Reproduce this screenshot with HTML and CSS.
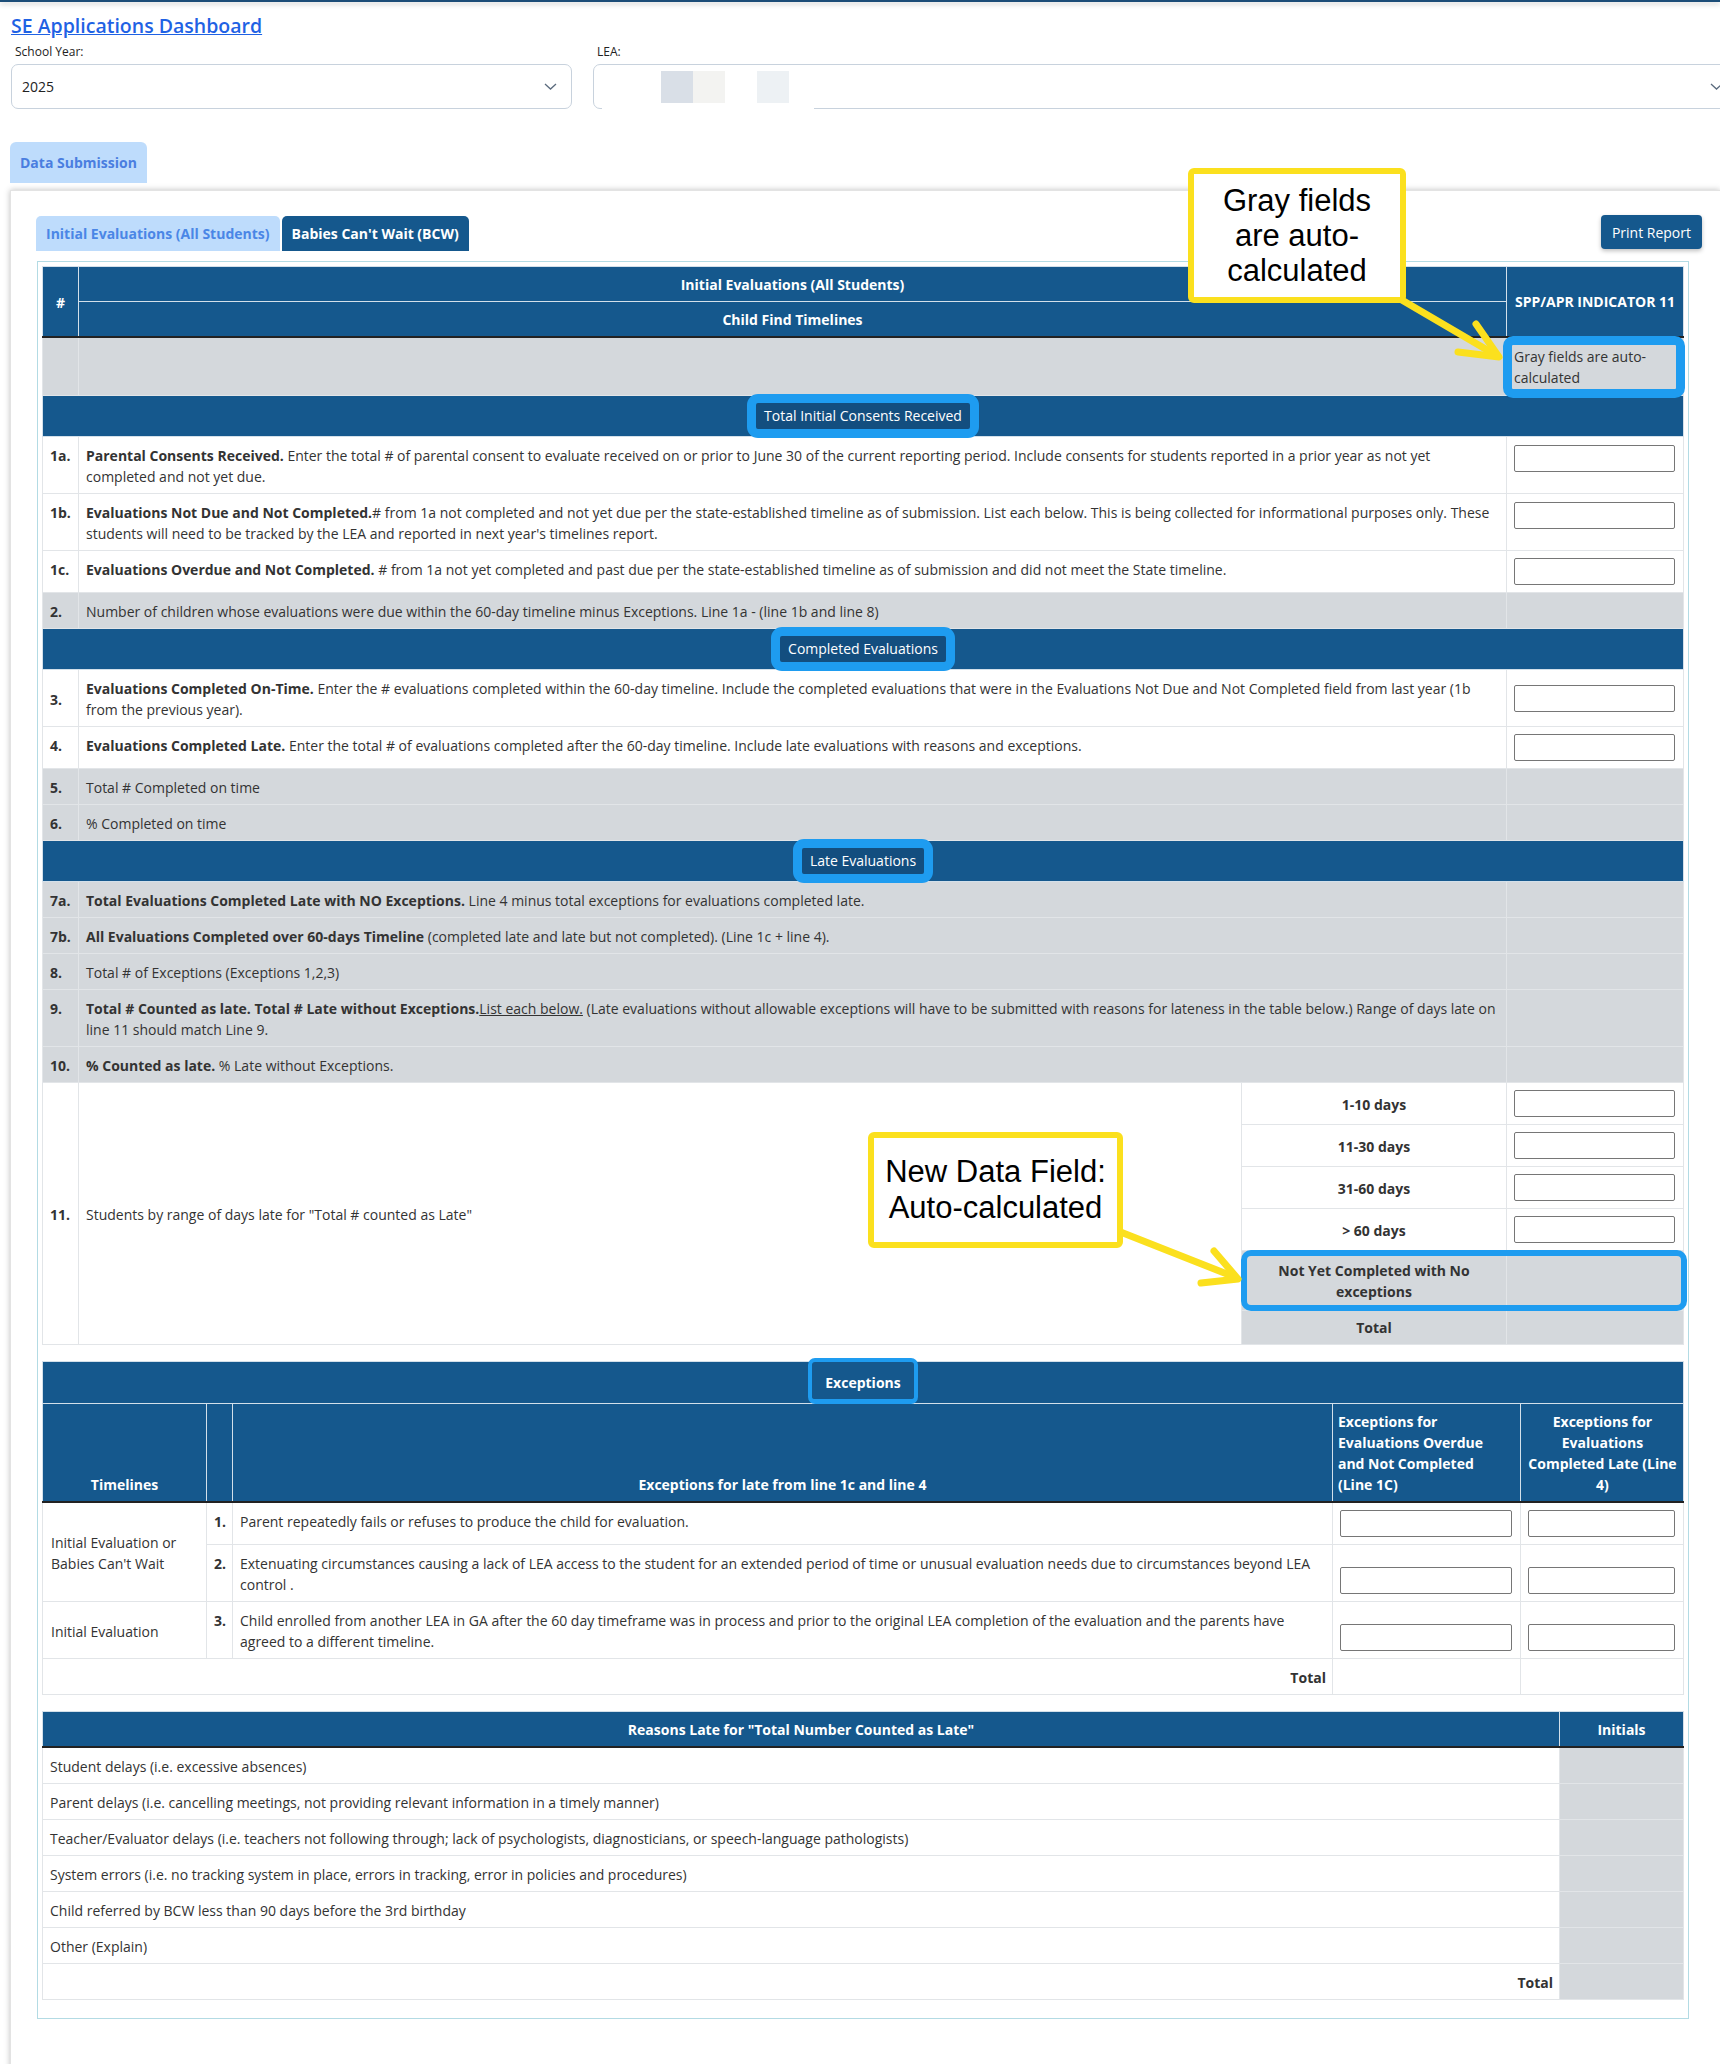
FILE: index.html
```html
<!DOCTYPE html>
<html lang="en">
<head>
    <meta charset="UTF-8">
    <title>SE Applications Dashboard</title>
    <link rel="stylesheet" href="styles.css">
</head>
<body>

    <div class="topbar"></div>

    <div class="page">
        <a class="app-title" href="#">SE Applications Dashboard</a>

        <!-- Filters -->
        <div class="filters">
            <div class="filter filter-year">
                <label>School Year:</label>
                <div class="select">
                    <span>2025</span>
                    <svg class="chev" width="13" height="7" viewBox="0 0 13 7"><polyline points="1,1 6.5,6 12,1" fill="none" stroke="#5b6b7e" stroke-width="1.3"/></svg>
                </div>
            </div>
            <div class="filter filter-lea">
                <label>LEA:</label>
                <div class="select select-lea">
                    <span class="redact">
                        <span class="blk b1"></span><span class="blk b2"></span><span class="blk gap"></span><span class="blk b3"></span>
                    </span>
                    <svg class="chev" width="13" height="7" viewBox="0 0 13 7"><polyline points="1,1 6.5,6 12,1" fill="none" stroke="#5b6b7e" stroke-width="1.3"/></svg>
                    <span class="cover"></span>
                </div>
            </div>
        </div>

        <div class="page-tabs">
            <span class="page-tab">Data Submission</span>
        </div>

        <!-- Main card -->
        <div class="card">
            <div class="card-tabs">
                <span class="tab tab-light">Initial Evaluations (All Students)</span>
                <span class="tab tab-dark">Babies Can't Wait (BCW)</span>
                <button class="print-btn" type="button">Print Report</button>
            </div>

            <div class="report-box">

                <!-- Child find timelines -->
                <table class="grid main-table">
                    <colgroup>
                        <col class="c-num"><col><col class="c-lbl"><col class="c-val">
                    </colgroup>
                    <thead>
                        <tr>
                            <th rowspan="2" class="hb">#</th>
                            <th colspan="2">Initial Evaluations (All Students)</th>
                            <th rowspan="2" class="hb tight">SPP/APR INDICATOR 11</th>
                        </tr>
                        <tr>
                            <th colspan="2" class="hb">Child Find Timelines</th>
                        </tr>
                    </thead>
                    <tbody>
                        <tr class="gr">
                            <td></td>
                            <td colspan="2"></td>
                            <td class="note-cell"><span class="ring ring-note"></span>Gray fields are auto-calculated</td>
                        </tr>

                        <tr class="section"><td colspan="4"><span class="sec-label">Total Initial Consents Received</span></td></tr>
                        <tr>
                            <td class="n">1a.</td>
                            <td colspan="2"><b>Parental Consents Received.</b> Enter the total # of parental consent to evaluate received on or prior to June 30 of the current reporting period. Include consents for students reported in a prior year as not yet completed and not yet due.</td>
                            <td class="v top"><input type="text"></td>
                        </tr>
                        <tr>
                            <td class="n">1b.</td>
                            <td colspan="2"><b>Evaluations Not Due and Not Completed.</b># from 1a not completed and not yet due per the state-established timeline as of submission. List each below. This is being collected for informational purposes only. These students will need to be tracked by the LEA and reported in next year's timelines report.</td>
                            <td class="v top"><input type="text"></td>
                        </tr>
                        <tr>
                            <td class="n">1c.</td>
                            <td colspan="2"><b>Evaluations Overdue and Not Completed.</b> # from 1a not yet completed and past due per the state-established timeline as of submission and did not meet the State timeline.</td>
                            <td class="v"><input type="text"></td>
                        </tr>
                        <tr class="gr">
                            <td class="n">2.</td>
                            <td colspan="2">Number of children whose evaluations were due within the 60-day timeline minus Exceptions. Line 1a - (line 1b and line 8)</td>
                            <td></td>
                        </tr>

                        <tr class="section"><td colspan="4"><span class="sec-label">Completed Evaluations</span></td></tr>
                        <tr>
                            <td class="n mid">3.</td>
                            <td colspan="2"><b>Evaluations Completed On-Time.</b> Enter the # evaluations completed within the 60-day timeline. Include the completed evaluations that were in the Evaluations Not Due and Not Completed field from last year (1b from the previous year).</td>
                            <td class="v"><input type="text"></td>
                        </tr>
                        <tr>
                            <td class="n">4.</td>
                            <td colspan="2"><b>Evaluations Completed Late.</b> Enter the total # of evaluations completed after the 60-day timeline. Include late evaluations with reasons and exceptions.</td>
                            <td class="v"><input type="text"></td>
                        </tr>
                        <tr class="gr">
                            <td class="n">5.</td>
                            <td colspan="2">Total # Completed on time</td>
                            <td></td>
                        </tr>
                        <tr class="gr">
                            <td class="n">6.</td>
                            <td colspan="2">% Completed on time</td>
                            <td></td>
                        </tr>

                        <tr class="section"><td colspan="4"><span class="sec-label">Late Evaluations</span></td></tr>
                        <tr class="gr">
                            <td class="n">7a.</td>
                            <td colspan="2"><b>Total Evaluations Completed Late with NO Exceptions.</b> Line 4 minus total exceptions for evaluations completed late.</td>
                            <td></td>
                        </tr>
                        <tr class="gr">
                            <td class="n">7b.</td>
                            <td colspan="2"><b>All Evaluations Completed over 60-days Timeline</b> (completed late and late but not completed). (Line 1c + line 4).</td>
                            <td></td>
                        </tr>
                        <tr class="gr">
                            <td class="n">8.</td>
                            <td colspan="2">Total # of Exceptions (Exceptions 1,2,3)</td>
                            <td></td>
                        </tr>
                        <tr class="gr">
                            <td class="n">9.</td>
                            <td colspan="2"><b>Total # Counted as late. Total # Late without Exceptions.</b><u>List each below.</u> (Late evaluations without allowable exceptions will have to be submitted with reasons for lateness in the table below.) Range of days late on line 11 should match Line 9.</td>
                            <td></td>
                        </tr>
                        <tr class="gr">
                            <td class="n">10.</td>
                            <td colspan="2"><b>% Counted as late.</b> % Late without Exceptions.</td>
                            <td></td>
                        </tr>

                        <tr>
                            <td class="n mid" rowspan="6">11.</td>
                            <td class="mid" rowspan="6">Students by range of days late for "Total # counted as Late"</td>
                            <td class="lbl">1-10 days</td>
                            <td class="v"><input type="text"></td>
                        </tr>
                        <tr>
                            <td class="lbl">11-30 days</td>
                            <td class="v"><input type="text"></td>
                        </tr>
                        <tr>
                            <td class="lbl">31-60 days</td>
                            <td class="v"><input type="text"></td>
                        </tr>
                        <tr>
                            <td class="lbl">&gt; 60 days</td>
                            <td class="v"><input type="text"></td>
                        </tr>
                        <tr>
                            <td class="lbl g ringed"><span class="ring ring-row"></span>Not Yet Completed with No exceptions</td>
                            <td class="g"></td>
                        </tr>
                        <tr>
                            <td class="lbl g short">Total</td>
                            <td class="g"></td>
                        </tr>
                    </tbody>
                </table>

                <!-- Exceptions -->
                <table class="grid exc-table">
                    <colgroup>
                        <col class="c-time"><col class="c-xn"><col><col class="c-x4"><col class="c-x5">
                    </colgroup>
                    <thead>
                        <tr class="section"><td colspan="5"><span class="sec-label thin">Exceptions</span></td></tr>
                        <tr class="exc-head">
                            <th class="hb">Timelines</th>
                            <th class="hb"></th>
                            <th class="hb">Exceptions for late from line 1c and line 4</th>
                            <th class="hb left nw">Exceptions for<br>Evaluations Overdue<br>and Not Completed<br>(Line 1C)</th>
                            <th class="hb nw">Exceptions for<br>Evaluations<br>Completed Late (Line<br>4)</th>
                        </tr>
                    </thead>
                    <tbody>
                        <tr>
                            <td class="mid time" rowspan="2">Initial Evaluation or Babies Can't Wait</td>
                            <td class="n xn">1.</td>
                            <td>Parent repeatedly fails or refuses to produce the child for evaluation.</td>
                            <td class="v bot"><input type="text"></td>
                            <td class="v bot"><input type="text"></td>
                        </tr>
                        <tr>
                            <td class="n xn">2.</td>
                            <td>Extenuating circumstances causing a lack of LEA access to the student for an extended period of time or unusual evaluation needs due to circumstances beyond LEA control .</td>
                            <td class="v bot"><input type="text"></td>
                            <td class="v bot"><input type="text"></td>
                        </tr>
                        <tr>
                            <td class="mid time">Initial Evaluation</td>
                            <td class="n xn">3.</td>
                            <td>Child enrolled from another LEA in GA after the 60 day timeframe was in process and prior to the original LEA completion of the evaluation and the parents have agreed to a different timeline.</td>
                            <td class="v bot"><input type="text"></td>
                            <td class="v bot"><input type="text"></td>
                        </tr>
                        <tr>
                            <td colspan="3" class="total">Total</td>
                            <td></td>
                            <td></td>
                        </tr>
                    </tbody>
                </table>

                <!-- Reasons late -->
                <table class="grid reasons-table">
                    <colgroup>
                        <col><col class="c-init">
                    </colgroup>
                    <thead>
                        <tr>
                            <th class="hb">Reasons Late for "Total Number Counted as Late"</th>
                            <th class="hb">Initials</th>
                        </tr>
                    </thead>
                    <tbody>
                        <tr><td>Student delays (i.e. excessive absences)</td><td class="g"></td></tr>
                        <tr><td>Parent delays (i.e. cancelling meetings, not providing relevant information in a timely manner)</td><td class="g"></td></tr>
                        <tr><td>Teacher/Evaluator delays (i.e. teachers not following through; lack of psychologists, diagnosticians, or speech-language pathologists)</td><td class="g"></td></tr>
                        <tr><td>System errors (i.e. no tracking system in place, errors in tracking, error in policies and procedures)</td><td class="g"></td></tr>
                        <tr><td>Child referred by BCW less than 90 days before the 3rd birthday</td><td class="g"></td></tr>
                        <tr><td>Other (Explain)</td><td class="g"></td></tr>
                        <tr><td class="total">Total</td><td class="g"></td></tr>
                    </tbody>
                </table>

            </div>
        </div>
    </div>

    <!-- Annotations -->
    <svg class="arrows" width="1720" height="2064" viewBox="0 0 1720 2064">
        <g fill="none" stroke="#fbe01e" stroke-width="7" stroke-linecap="round" stroke-linejoin="round">
            <path d="M1395 296 L1494 354"/>
            <path d="M1476 324 L1499 357 L1458 352"/>
            <path d="M1118 1231 L1232 1276"/>
            <path d="M1214 1251 L1238 1279 L1201 1283"/>
        </g>
    </svg>
    <div class="callout callout-gray">Gray fields<br>are auto-<br>calculated</div>
    <div class="callout callout-new">New Data Field:<br>Auto-calculated</div>

</body>
</html>
```

FILE: styles.css
```css
html, body {
    margin: 0;
    padding: 0;
    overflow: hidden;
}

body {
    position: relative;
    font-family: "Open Sans", "Liberation Sans", Arial, sans-serif;
    color: #333;
    background: #fff;
}

/* Top strip */
.topbar {
    height: 2px;
    background: #1c4d78;
    box-shadow: 0 2px 5px rgba(0, 0, 0, 0.25);
}

.page {
    padding: 12px 0 0 10px;
}

.app-title {
    display: inline-block;
    margin-left: 1px;
    font-size: 19.5px;
    font-weight: 600;
    line-height: 24px;
    color: #1f62e4;
    text-decoration: underline;
}

/* Filters */
.filters {
    display: flex;
    gap: 21px;
    margin: 6px 0 0 1px;
}

.filter {
    flex: none;
}

.filter-year {
    width: 561px;
}

.filter-lea {
    width: 1145px;
}

.filter label {
    display: block;
    font-size: 12px;
    line-height: 16px;
    padding-left: 4px;
    margin-bottom: 4px;
    color: #222;
}

.select {
    position: relative;
    display: flex;
    align-items: center;
    justify-content: space-between;
    height: 45px;
    box-sizing: border-box;
    padding: 0 14px 0 10px;
    border: 1px solid #c8d2dd;
    border-radius: 7px;
    font-size: 14px;
    color: #222;
}

.redact {
    display: flex;
    margin-left: 57px;
}

.blk {
    width: 32px;
    height: 32px;
}

.b1 { background: #d9dfe7; }
.b2 { background: #f3f3f1; }
.gap { background: transparent; }
.b3 { background: #edf1f4; }

.select-lea .cover {
    position: absolute;
    left: 8px;
    bottom: -2px;
    width: 212px;
    height: 4px;
    background: #fff;
}

/* Page tab */
.page-tabs {
    display: flex;
    margin-top: 33px;
}

.page-tab {
    height: 41px;
    line-height: 41px;
    padding: 0 10px;
    background: #bedcfc;
    color: #4a7ee0;
    font-weight: 700;
    font-size: 14px;
    border-radius: 6px 6px 0 0;
}

/* Card */
.card {
    margin-top: 7px;
    background: #fff;
    border: 1px solid #e3e3e3;
    border-right: 0;
    box-shadow: 0 0 6px rgba(0, 0, 0, 0.25);
    padding: 25px 18px 60px 25px;
}

.card-tabs {
    display: flex;
    align-items: flex-start;
}

.tab {
    height: 35px;
    line-height: 35px;
    padding: 0 10px;
    font-size: 14px;
    font-weight: 700;
    border-radius: 5px 5px 0 0;
}

.tab + .tab {
    margin-left: 2px;
}

.tab-light {
    background: #bedcfc;
    color: #4a86e6;
}

.tab-dark {
    background: #15588d;
    color: #fff;
}

.print-btn {
    margin-left: auto;
    margin-top: -1px;
    height: 34px;
    padding: 0 11px;
    border: none;
    border-radius: 4px;
    background: #15588d;
    color: #fff;
    font-family: inherit;
    font-size: 14px;
    box-shadow: 0 2px 4px rgba(0, 0, 0, 0.25);
}

.report-box {
    margin: 10px 13px 0 1px;
    border: 1px solid #b3dbe4;
    padding: 4px 4px 18px;
}

/* Tables */
.grid {
    width: 100%;
    table-layout: fixed;
    border-collapse: collapse;
    font-size: 14px;
    line-height: 21px;
    color: #333;
}

.grid + .grid {
    margin-top: 16px;
}

.grid th {
    background: #15588d;
    color: #fff;
    font-weight: 700;
    border: 1px solid #d3e0ea;
    padding: 7px 7px 6px;
    text-align: center;
    vertical-align: middle;
}

.grid th.tight {
    padding: 7px 3px;
    white-space: nowrap;
}

.grid th.nw {
    white-space: nowrap;
    padding-left: 5px;
    padding-right: 4px;
}

.grid .hb {
    border-bottom: 2px solid #222;
}

.grid td {
    border: 1px solid #e2e5e8;
    padding: 8px 7px 6px;
    vertical-align: top;
}

.grid b {
    font-weight: 700;
}

.c-num { width: 36px; }
.c-lbl { width: 265px; }
.c-val { width: 177px; }

.c-time { width: 164px; }
.c-xn { width: 26px; }
.c-x4 { width: 188px; }
.c-x5 { width: 163px; }

.c-init { width: 124px; }

.gr td,
.grid td.g {
    background: #d4d8dc;
}

.n {
    font-weight: 700;
    white-space: nowrap;
}

.grid td.mid {
    vertical-align: middle;
}

.grid td.v {
    vertical-align: middle;
    padding: 7px 8px 7px 7px;
}

.grid td.v.top {
    vertical-align: top;
    padding-top: 8px;
    padding-bottom: 6px;
}

.grid td.v.bot {
    vertical-align: bottom;
    padding-bottom: 7px;
}

.grid input {
    display: block;
    width: 100%;
    height: 27px;
    box-sizing: border-box;
    margin: 0;
    border: 1px solid #767676;
    border-radius: 2px;
    background: #fff;
}

.grid td.lbl {
    text-align: center;
    font-weight: 700;
    vertical-align: middle;
}

.grid td.ringed {
    padding: 9px 7px 8px;
}

.grid td.short {
    padding: 6px 7px;
}

.grid td.total {
    text-align: right;
    font-weight: 700;
    vertical-align: middle;
    padding-right: 6px;
}

/* Section bars */
.grid tr.section td {
    background: #15588d;
    color: #fff;
    text-align: center;
    padding: 7px 7px 7px;
    line-height: 26px;
    border-color: #d3e0ea;
}

.sec-label {
    position: relative;
    display: inline-block;
    vertical-align: top;
    line-height: 26px;
    padding: 0 8px;
    background: #134e7f;
}

.sec-label::before {
    content: "";
    position: absolute;
    top: -9px;
    bottom: -9px;
    left: -9px;
    right: -9px;
    border: 9px solid #1e9cf0;
    border-radius: 11px;
}

.exc-table tr.section td {
    padding: 2px 7px 1px;
}

.sec-label.thin {
    line-height: 38px;
    padding: 0 13px;
    background: transparent;
    font-weight: 700;
}

.sec-label.thin::before {
    top: -6px;
    bottom: -2px;
    left: -4px;
    right: -4px;
    border-width: 4px 4px 5px;
    border-radius: 7px;
}

/* Exceptions table */
.exc-head th {
    vertical-align: bottom;
    padding-top: 7px;
    padding-bottom: 6px;
}

.exc-head th.left {
    text-align: left;
}

.grid td.time {
    padding-left: 8px;
}

.grid td.xn {
    padding: 8px 2px 6px 7px;
}

/* Annotation rings */
.note-cell,
.ringed {
    position: relative;
}

.grid td.note-cell {
    padding-bottom: 7px;
}

.ring {
    position: absolute;
    border: 9px solid #1e9cf0;
    border-radius: 10px;
    pointer-events: none;
}

.ring-note {
    top: -2px;
    bottom: -3px;
    left: -4px;
    right: -2px;
}

.ring-row {
    top: -1px;
    bottom: -1px;
    left: -1px;
    width: 446px;
    box-sizing: border-box;
    border-width: 6px;
}

/* Callouts */
.arrows {
    position: absolute;
    left: 0;
    top: 0;
    pointer-events: none;
}

.callout {
    position: absolute;
    display: flex;
    align-items: center;
    justify-content: center;
    box-sizing: border-box;
    border: 6px solid #fbe01e;
    border-radius: 6px;
    background: #fff;
    color: #000;
    font-family: "Liberation Sans", Arial, sans-serif;
    font-size: 31px;
    line-height: 35px;
    text-align: center;
}

.callout-gray {
    left: 1188px;
    top: 168px;
    width: 218px;
    height: 135px;
}

.callout-new {
    left: 868px;
    top: 1132px;
    width: 255px;
    height: 116px;
    line-height: 36px;
}
```
